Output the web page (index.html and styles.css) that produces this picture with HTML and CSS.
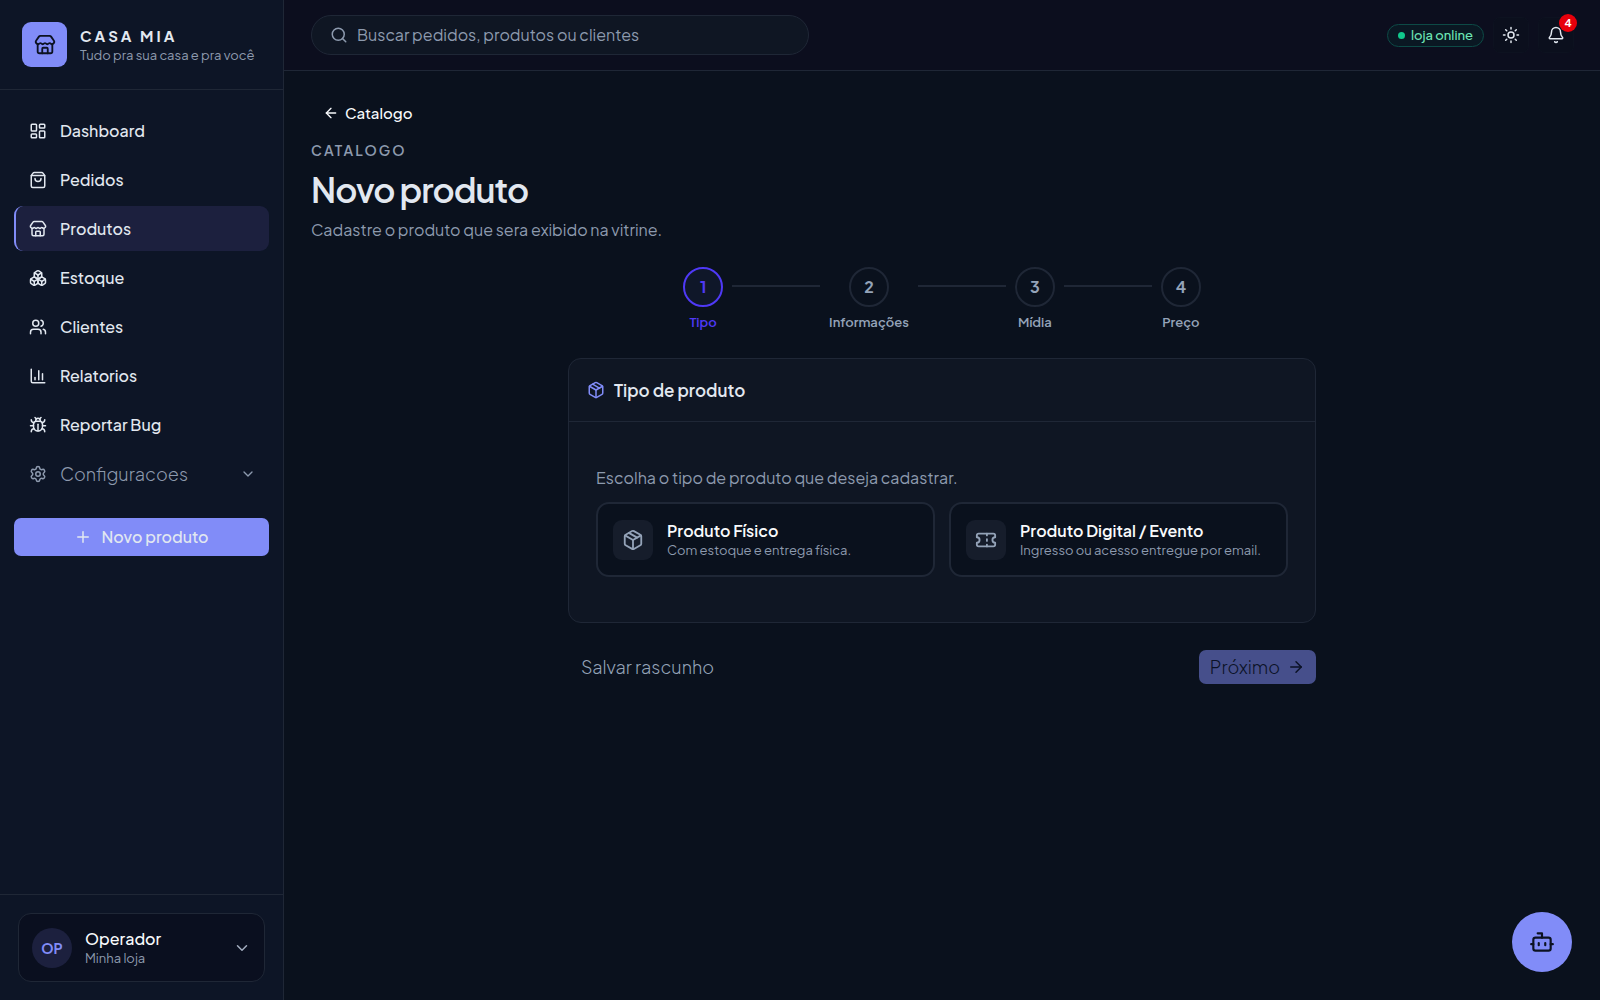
FILE: index.html
```
<!DOCTYPE html>
<html lang="pt-BR">
<head>
<meta charset="utf-8">
<meta name="viewport" content="width=device-width, initial-scale=1">
<title>Novo produto - Casa Mia</title>
<link rel="stylesheet" href="styles.css">
</head>
<body>
<svg class="sprite" aria-hidden="true">
  <symbol id="store" viewBox="0 0 24 24"><path d="M15 21v-5a1 1 0 0 0-1-1h-4a1 1 0 0 0-1 1v5"/><path d="M17.774 10.31a1.12 1.12 0 0 0-1.549 0 2.5 2.5 0 0 1-3.451 0 1.12 1.12 0 0 0-1.548 0 2.5 2.5 0 0 1-3.452 0 1.12 1.12 0 0 0-1.549 0 2.5 2.5 0 0 1-3.77-3.248l2.889-4.184A2 2 0 0 1 7 2h10a2 2 0 0 1 1.653.873l2.895 4.192a2.5 2.5 0 0 1-3.774 3.244"/><path d="M4 10.95V19a2 2 0 0 0 2 2h12a2 2 0 0 0 2-2v-8.05"/></symbol>
  <symbol id="dashboard" viewBox="0 0 24 24"><rect width="7" height="9" x="3" y="3" rx="1"/><rect width="7" height="5" x="14" y="3" rx="1"/><rect width="7" height="9" x="14" y="12" rx="1"/><rect width="7" height="5" x="3" y="16" rx="1"/></symbol>
  <symbol id="bag" viewBox="0 0 24 24"><path d="M16 10a4 4 0 0 1-8 0"/><path d="M3.103 6.034h17.794"/><path d="M3.4 5.467a2 2 0 0 0-.4 1.2V20a2 2 0 0 0 2 2h14a2 2 0 0 0 2-2V6.667a2 2 0 0 0-.4-1.2l-2-2.667A2 2 0 0 0 17 2H7a2 2 0 0 0-1.6.8z"/></symbol>
  <symbol id="boxes" viewBox="0 0 24 24"><path d="M2.97 12.92A2 2 0 0 0 2 14.63v3.24a2 2 0 0 0 .97 1.71l3 1.8a2 2 0 0 0 2.06 0L12 19v-5.5l-5-3-4.03 2.42Z"/><path d="m7 16.5-4.74-2.85"/><path d="m7 16.5 5-3"/><path d="M7 16.5v5.17"/><path d="M12 13.5V19l3.97 2.38a2 2 0 0 0 2.06 0l3-1.8a2 2 0 0 0 .97-1.71v-3.24a2 2 0 0 0-.97-1.71L17 10.5l-5 3Z"/><path d="m17 16.5-5-3"/><path d="m17 16.5 4.74-2.85"/><path d="M17 16.5v5.17"/><path d="M7.97 4.42A2 2 0 0 0 7 6.13v4.37l5 3 5-3V6.13a2 2 0 0 0-.97-1.71l-3-1.8a2 2 0 0 0-2.06 0l-3 1.8Z"/><path d="M12 8 7.26 5.15"/><path d="m12 8 4.74-2.85"/><path d="M12 13.5V8"/></symbol>
  <symbol id="users" viewBox="0 0 24 24"><path d="M16 21v-2a4 4 0 0 0-4-4H6a4 4 0 0 0-4 4v2"/><path d="M16 3.128a4 4 0 0 1 0 7.744"/><path d="M22 21v-2a4 4 0 0 0-3-3.87"/><circle cx="9" cy="7" r="4"/></symbol>
  <symbol id="chart" viewBox="0 0 24 24"><path d="M3 3v16a2 2 0 0 0 2 2h16"/><path d="M18 17V9"/><path d="M13 17V5"/><path d="M8 17v-3"/></symbol>
  <symbol id="bug" viewBox="0 0 24 24"><path d="M12 20v-9"/><path d="M14 7a4 4 0 0 1 4 4v3a6 6 0 0 1-12 0v-3a4 4 0 0 1 4-4z"/><path d="M14.12 3.88 16 2"/><path d="M21 21a4 4 0 0 0-3.81-4"/><path d="M21 5a4 4 0 0 1-3.55 3.97"/><path d="M22 13h-4"/><path d="M3 21a4 4 0 0 1 3.81-4"/><path d="M3 5a4 4 0 0 0 3.55 3.97"/><path d="M6 13H2"/><path d="m8 2 1.88 1.88"/><path d="M9 7.13V6a3 3 0 1 1 6 0v1.13"/></symbol>
  <symbol id="gear" viewBox="0 0 24 24"><path d="M9.671 4.136a2.34 2.34 0 0 1 4.659 0 2.34 2.34 0 0 0 3.319 1.915 2.34 2.34 0 0 1 2.33 4.033 2.34 2.34 0 0 0 0 3.831 2.34 2.34 0 0 1-2.33 4.033 2.34 2.34 0 0 0-3.319 1.915 2.34 2.34 0 0 1-4.659 0 2.34 2.34 0 0 0-3.32-1.915 2.34 2.34 0 0 1-2.33-4.033 2.34 2.34 0 0 0 0-3.831A2.34 2.34 0 0 1 6.35 6.051a2.34 2.34 0 0 0 3.319-1.915"/><circle cx="12" cy="12" r="3"/></symbol>
  <symbol id="chevron" viewBox="0 0 24 24"><path d="m6 9 6 6 6-6"/></symbol>
  <symbol id="plus" viewBox="0 0 24 24"><path d="M5 12h14"/><path d="M12 5v14"/></symbol>
  <symbol id="search" viewBox="0 0 24 24"><circle cx="11" cy="11" r="8"/><path d="m21 21-4.34-4.34"/></symbol>
  <symbol id="sun" viewBox="0 0 24 24"><circle cx="12" cy="12" r="4"/><path d="M12 2v2M12 20v2M4.93 4.93l1.41 1.41M17.66 17.66l1.41 1.41M2 12h2M20 12h2M6.34 17.66l-1.41 1.41M19.07 4.93l-1.41 1.41"/></symbol>
  <symbol id="bell" viewBox="0 0 24 24"><path d="M10.268 21a2 2 0 0 0 3.464 0"/><path d="M3.262 15.326A1 1 0 0 0 4 17h16a1 1 0 0 0 .74-1.673C19.41 13.956 18 12.499 18 8A6 6 0 0 0 6 8c0 4.499-1.411 5.956-2.738 7.326"/></symbol>
  <symbol id="arrow-left" viewBox="0 0 24 24"><path d="m12 19-7-7 7-7"/><path d="M19 12H5"/></symbol>
  <symbol id="arrow-right" viewBox="0 0 24 24"><path d="M5 12h14"/><path d="m12 5 7 7-7 7"/></symbol>
  <symbol id="package" viewBox="0 0 24 24"><path d="M11 21.73a2 2 0 0 0 2 0l7-4A2 2 0 0 0 21 16V8a2 2 0 0 0-1-1.73l-7-4a2 2 0 0 0-2 0l-7 4A2 2 0 0 0 3 8v8a2 2 0 0 0 1 1.73z"/><path d="M12 22V12"/><path d="M3.29 7 12 12l8.71-5"/><path d="m7.5 4.27 9 5.15"/></symbol>
  <symbol id="ticket" viewBox="0 0 24 24"><path d="M2 9a3 3 0 0 1 0 6v2a2 2 0 0 0 2 2h16a2 2 0 0 0 2-2v-2a3 3 0 0 1 0-6V7a2 2 0 0 0-2-2H4a2 2 0 0 0-2 2Z"/><path d="M13 5v2M13 17v2M13 11v2"/></symbol>
  <symbol id="bot" viewBox="0 0 24 24"><path d="M12 8V4H8"/><rect width="16" height="12" x="4" y="8" rx="2"/><path d="M2 14h2M20 14h2M15 13v2M9 13v2"/></symbol>
</svg>
<div class="app">
  <aside class="sidebar">
    <div class="brand">
      <span class="brand-logo"><svg class="icon icon-lg"><use href="#store"/></svg></span>
      <div>
        <div class="brand-name">CASA MIA</div>
        <div class="brand-tagline">Tudo pra sua casa e pra você</div>
      </div>
    </div>
    <nav class="nav">
      <a class="nav-link" href="#"><svg class="icon"><use href="#dashboard"/></svg>Dashboard</a>
      <a class="nav-link" href="#"><svg class="icon"><use href="#bag"/></svg>Pedidos</a>
      <a class="nav-link active" href="#" aria-current="page"><svg class="icon"><use href="#store"/></svg>Produtos</a>
      <a class="nav-link" href="#"><svg class="icon"><use href="#boxes"/></svg>Estoque</a>
      <a class="nav-link" href="#"><svg class="icon"><use href="#users"/></svg>Clientes</a>
      <a class="nav-link" href="#"><svg class="icon"><use href="#chart"/></svg>Relatorios</a>
      <a class="nav-link" href="#"><svg class="icon"><use href="#bug"/></svg>Reportar Bug</a>
      <button class="nav-link nav-group" type="button" aria-expanded="false"><svg class="icon"><use href="#gear"/></svg><span>Configuracoes</span><svg class="icon icon-sm"><use href="#chevron"/></svg></button>
      <button class="new-product" type="button"><svg class="icon"><use href="#plus"/></svg>Novo produto</button>
    </nav>
    <div class="account-area">
      <button class="account" type="button">
        <span class="avatar">OP</span>
        <span class="account-text"><span class="account-name">Operador</span><span class="account-store">Minha loja</span></span>
        <svg class="icon"><use href="#chevron"/></svg>
      </button>
    </div>
  </aside>
  <div class="page">
    <header class="topbar">
      <label class="search"><svg class="icon"><use href="#search"/></svg><input type="search" placeholder="Buscar pedidos, produtos ou clientes" aria-label="Buscar"></label>
      <div class="topbar-actions">
        <span class="status"><span class="status-dot"></span>loja online</span>
        <button class="icon-button" type="button" aria-label="Alternar tema"><svg class="icon"><use href="#sun"/></svg></button>
        <button class="icon-button" type="button" aria-label="Notificações"><svg class="icon"><use href="#bell"/></svg><span class="badge">4</span></button>
      </div>
    </header>
    <main class="content">
      <a class="back" href="#"><svg class="icon icon-sm"><use href="#arrow-left"/></svg>Catalogo</a>
      <p class="eyebrow">CATALOGO</p>
      <h1 class="title">Novo produto</h1>
      <p class="subtitle">Cadastre o produto que sera exibido na vitrine.</p>
      <div class="wizard">
        <ol class="steps">
          <li class="step current" aria-current="step"><span class="step-number">1</span><span class="step-label">Tipo</span></li>
          <li class="step-line" aria-hidden="true"></li>
          <li class="step"><span class="step-number">2</span><span class="step-label">Informações</span></li>
          <li class="step-line" aria-hidden="true"></li>
          <li class="step"><span class="step-number">3</span><span class="step-label">Mídia</span></li>
          <li class="step-line" aria-hidden="true"></li>
          <li class="step"><span class="step-number">4</span><span class="step-label">Preço</span></li>
        </ol>
        <section class="card">
          <h2 class="card-title"><svg class="icon"><use href="#package"/></svg>Tipo de produto</h2>
          <div class="card-body">
            <p class="prompt">Escolha o tipo de produto que deseja cadastrar.</p>
            <div class="options">
              <button class="option" type="button">
                <span class="option-icon"><svg class="icon icon-lg"><use href="#package"/></svg></span>
                <span class="option-text"><span class="option-name">Produto Físico</span><span class="option-note">Com estoque e entrega física.</span></span>
              </button>
              <button class="option" type="button">
                <span class="option-icon"><svg class="icon icon-lg"><use href="#ticket"/></svg></span>
                <span class="option-text"><span class="option-name">Produto Digital / Evento</span><span class="option-note">Ingresso ou acesso entregue por email.</span></span>
              </button>
            </div>
          </div>
        </section>
        <div class="wizard-actions">
          <button class="draft" type="button">Salvar rascunho</button>
          <button class="next" type="button" disabled>Próximo<svg class="icon"><use href="#arrow-right"/></svg></button>
        </div>
      </div>
    </main>
  </div>
</div>
<button class="assistant" type="button" aria-label="Assistente"><svg class="icon icon-xl"><use href="#bot"/></svg></button>
</body>
</html>
```
FILE: styles.css
```
:root {
  --bg: #0a111d;
  --sidebar: #0d1526;
  --surface: #0f1623;
  --line: #1f2736;
  --text: #e2e8f0;
  --muted: #8d9aae;
  --primary: #818cf8;
  --ink: #0c1222;
}

* { box-sizing: border-box; }

body {
  margin: 0;
  background: var(--bg);
  color: var(--text);
  font-family: "Plus Jakarta Sans", Inter, "Open Sans", sans-serif;
  font-size: 16px;
  line-height: 20px;
}

button, input { font: inherit; color: inherit; }
button { margin: 0; border: 0; padding: 0; background: none; text-align: left; }
a { color: inherit; text-decoration: none; }
p, h1, h2, ol { margin: 0; padding: 0; }

.sprite { display: none; }

.icon {
  flex: none;
  width: 18px;
  height: 18px;
  fill: none;
  stroke: currentColor;
  stroke-width: 2;
  stroke-linecap: round;
  stroke-linejoin: round;
}
.icon-sm { width: 16px; height: 16px; }
.icon-lg { width: 22px; height: 22px; }
.icon-xl { width: 26px; height: 26px; }

.app {
  display: grid;
  grid-template-columns: 284px 1fr;
  min-height: 100vh;
}

/* Sidebar */
.sidebar {
  position: sticky;
  top: 0;
  display: flex;
  flex-direction: column;
  height: 100vh;
  background: var(--sidebar);
  border-right: 1px solid var(--line);
}
.brand {
  display: flex;
  align-items: center;
  gap: 13px;
  padding: 22px;
  border-bottom: 1px solid var(--line);
}
.brand-logo {
  display: grid;
  place-items: center;
  width: 45px;
  height: 45px;
  border-radius: 9px;
  background: var(--primary);
  color: var(--ink);
}
.brand-name { font-size: 15px; font-weight: 700; letter-spacing: 3px; }
.brand-tagline { font-size: 13px; line-height: 18px; color: var(--muted); white-space: nowrap; }

.nav {
  display: flex;
  flex: 1;
  flex-direction: column;
  gap: 4px;
  padding: 18px 14px;
}
.nav-link {
  display: flex;
  align-items: center;
  gap: 13px;
  height: 45px;
  padding: 0 13px;
  border-left: 2px solid transparent;
  border-radius: 9px;
  font-weight: 500;
}
.nav-link.active { background: #1c203e; border-left-color: var(--primary); }
.nav-group { font-size: 18px; font-weight: 300; color: var(--muted); }
.nav-group span { flex: 1; }
.new-product {
  display: flex;
  align-items: center;
  justify-content: center;
  gap: 9px;
  height: 38px;
  margin-top: 18px;
  border-radius: 7px;
  background: var(--primary);
  font-weight: 500;
}

.account-area { padding: 18px; border-top: 1px solid var(--line); }
.account {
  display: flex;
  align-items: center;
  gap: 13px;
  width: 100%;
  height: 69px;
  padding: 0 13px;
  border: 1px solid var(--line);
  border-radius: 13px;
  background: #0a0f1f;
}
.avatar {
  display: grid;
  place-items: center;
  width: 40px;
  height: 40px;
  border-radius: 50%;
  background: #1c203e;
  color: var(--primary);
  font-size: 14px;
  font-weight: 700;
}
.account-text { display: flex; flex: 1; flex-direction: column; }
.account-name { font-weight: 500; color: #f8fafc; }
.account-store { font-size: 13px; line-height: 18px; color: var(--muted); }
.account .icon { color: #a3aec0; }

/* Top bar */
.topbar {
  display: flex;
  align-items: center;
  justify-content: space-between;
  height: 71px;
  padding: 0 26px 0 27px;
  border-bottom: 1px solid var(--line);
  background: #0c0e1e;
}
.search {
  display: flex;
  align-items: center;
  gap: 9px;
  flex: 0 1 498px;
  height: 40px;
  padding: 0 18px;
  border: 1px solid var(--line);
  border-radius: 20px;
  background: var(--surface);
  color: var(--muted);
}
.search input { flex: 1; min-width: 0; border: 0; padding: 0; outline: 0; background: none; }
.search input::placeholder { color: var(--muted); opacity: 1; }
.topbar-actions { display: flex; align-items: center; gap: 9px; }
.status {
  display: flex;
  align-items: center;
  gap: 6px;
  height: 23px;
  padding: 0 10px;
  border: 1px solid #0d4a46;
  border-radius: 12px;
  background: #0a1823;
  color: #6ee7b7;
  font-size: 13px;
  font-weight: 500;
}
.status-dot { width: 7px; height: 7px; border-radius: 50%; background: #10c98c; }
.icon-button {
  position: relative;
  display: grid;
  place-items: center;
  width: 36px;
  height: 36px;
  border: 1px solid #0d1220;
  border-radius: 7px;
  background: #0b0f1d;
}
.badge {
  position: absolute;
  top: -4px;
  right: -4px;
  width: 18px;
  height: 18px;
  border-radius: 50%;
  background: #e7000b;
  color: #fff;
  font-size: 11px;
  font-weight: 700;
  line-height: 18px;
  text-align: center;
}

/* Page heading */
.content { padding: 27px; }
.back {
  display: flex;
  align-items: center;
  gap: 6px;
  width: fit-content;
  height: 30px;
  padding: 0 12px;
  font-size: 15px;
  font-weight: 500;
  color: #f8fafc;
}
.eyebrow {
  margin-top: 13px;
  font-size: 14px;
  line-height: 18px;
  font-weight: 600;
  letter-spacing: 2px;
  color: var(--muted);
}
.title { margin-top: 9px; font-size: 34px; line-height: 44px; font-weight: 600; letter-spacing: -1px; }
.subtitle { margin-top: 8px; color: var(--muted); }

/* Wizard */
.wizard { max-width: 748px; margin: 27px auto 0; }
.steps { display: flex; justify-content: center; gap: 9px; list-style: none; }
.step { display: flex; flex-direction: column; align-items: center; gap: 6px; color: #94a3b8; }
.step-number {
  display: grid;
  place-items: center;
  width: 40px;
  height: 40px;
  border: 2px solid var(--line);
  border-radius: 50%;
  font-weight: 700;
}
.step-label { font-size: 13px; line-height: 18px; font-weight: 600; }
.step.current { color: #4f39f6; }
.step.current .step-number { border-color: #4f39f6; background: #0f1729; }
.step-line { width: 88px; height: 2px; margin-top: 18px; background: var(--line); }

.card {
  margin-top: 27px;
  border: 1px solid var(--line);
  border-radius: 13px;
  background: var(--surface);
}
.card-title {
  display: flex;
  align-items: center;
  gap: 9px;
  height: 63px;
  padding: 0 18px;
  border-bottom: 1px solid var(--line);
  font-size: 17px;
  font-weight: 600;
}
.card-title .icon { color: var(--primary); }
.card-body { padding: 46px 27px 45px; }
.prompt { color: var(--muted); }
.options {
  display: grid;
  grid-template-columns: repeat(auto-fit, minmax(300px, 1fr));
  gap: 14px;
  margin-top: 14px;
}
.option {
  display: flex;
  align-items: center;
  gap: 14px;
  height: 75px;
  padding: 0 15px;
  border: 2px solid var(--line);
  border-radius: 13px;
  background: var(--bg);
}
.option-icon {
  display: grid;
  place-items: center;
  width: 40px;
  height: 40px;
  border-radius: 9px;
  background: #161d2b;
  color: #94a3b8;
}
.option-text { display: flex; flex-direction: column; }
.option-name { font-weight: 600; color: #f8fafc; }
.option-note { font-size: 13px; line-height: 18px; color: var(--muted); }

.wizard-actions {
  display: flex;
  align-items: center;
  justify-content: space-between;
  margin-top: 27px;
  font-size: 18px;
  font-weight: 300;
}
.draft { height: 34px; padding: 0 13px; color: #94a3b8; }
.next {
  display: flex;
  align-items: center;
  gap: 7px;
  height: 34px;
  padding: 0 11px;
  border-radius: 7px;
  background: #464f8b;
  color: #0b1226;
}

.assistant {
  position: fixed;
  right: 28px;
  bottom: 28px;
  display: grid;
  place-items: center;
  width: 60px;
  height: 60px;
  border-radius: 50%;
  background: var(--primary);
  color: var(--ink);
}
```
